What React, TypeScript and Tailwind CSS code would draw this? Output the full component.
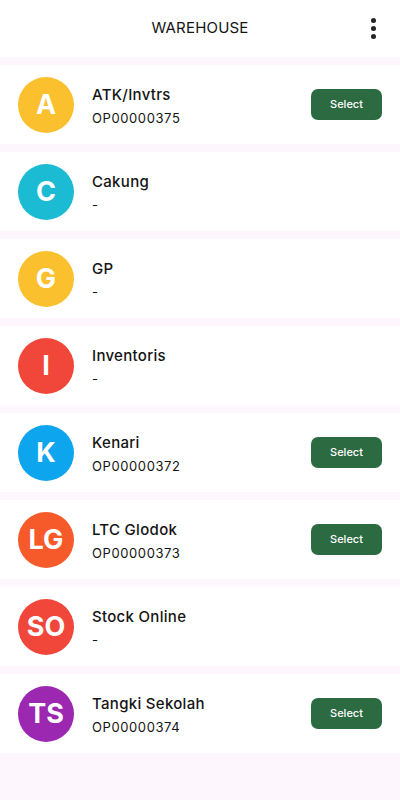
import React from "react";

type Item = { init: string; color: string; name: string; code: string; select: boolean };

const items: Item[] = [
  { init: "A", color: "bg-[#fbc02d]", name: "ATK/Invtrs", code: "OP00000375", select: true },
  { init: "C", color: "bg-[#1bbcd3]", name: "Cakung", code: "-", select: false },
  { init: "G", color: "bg-[#fbc02d]", name: "GP", code: "-", select: false },
  { init: "I", color: "bg-[#f1463a]", name: "Inventoris", code: "-", select: false },
  { init: "K", color: "bg-[#0ea5ef]", name: "Kenari", code: "OP00000372", select: true },
  { init: "LG", color: "bg-[#f75a2a]", name: "LTC Glodok", code: "OP00000373", select: true },
  { init: "SO", color: "bg-[#f1463a]", name: "Stock Online", code: "-", select: false },
  { init: "TS", color: "bg-[#9c27b0]", name: "Tangki Sekolah", code: "OP00000374", select: true },
];

export default function App() {
  return (
    <div className="w-[400px] min-h-[800px] bg-[#fdf7fd] font-['Inter',sans-serif] text-[#141414]">
      <div className="h-[57px] bg-white flex items-center justify-center relative">
        <span className="text-[15px] tracking-[0.2px]">WAREHOUSE</span>
        <div className="absolute right-[24px] top-[18px] flex flex-col gap-[3px]">
          <span className="w-[5px] h-[5px] rounded-full bg-[#222]" />
          <span className="w-[5px] h-[5px] rounded-full bg-[#222]" />
          <span className="w-[5px] h-[5px] rounded-full bg-[#222]" />
        </div>
      </div>
      <div className="flex flex-col gap-[8px] pt-[8px]">
        {items.map((it) => (
          <div key={it.name} className="h-[79px] bg-white flex items-center pl-[18px] pr-[18px]">
            <div className={`w-[56px] h-[56px] rounded-full ${it.color} flex items-center justify-center text-white font-bold text-[27px] leading-none shrink-0`}>
              {it.init}
            </div>
            <div className="flex-1 ml-[18px] flex flex-col gap-[6px] pt-[2px]">
              <span className="text-[15px] font-medium leading-[18px] tracking-[0.3px]">{it.name}</span>
              <span className="text-[13px] leading-[16px] tracking-[0.6px]">{it.code}</span>
            </div>
            {it.select && (
              <button className="w-[71px] h-[31px] rounded-[7px] bg-[#2c6a41] text-white text-[11px] font-medium">
                Select
              </button>
            )}
          </div>
        ))}
      </div>
    </div>
  );
}
